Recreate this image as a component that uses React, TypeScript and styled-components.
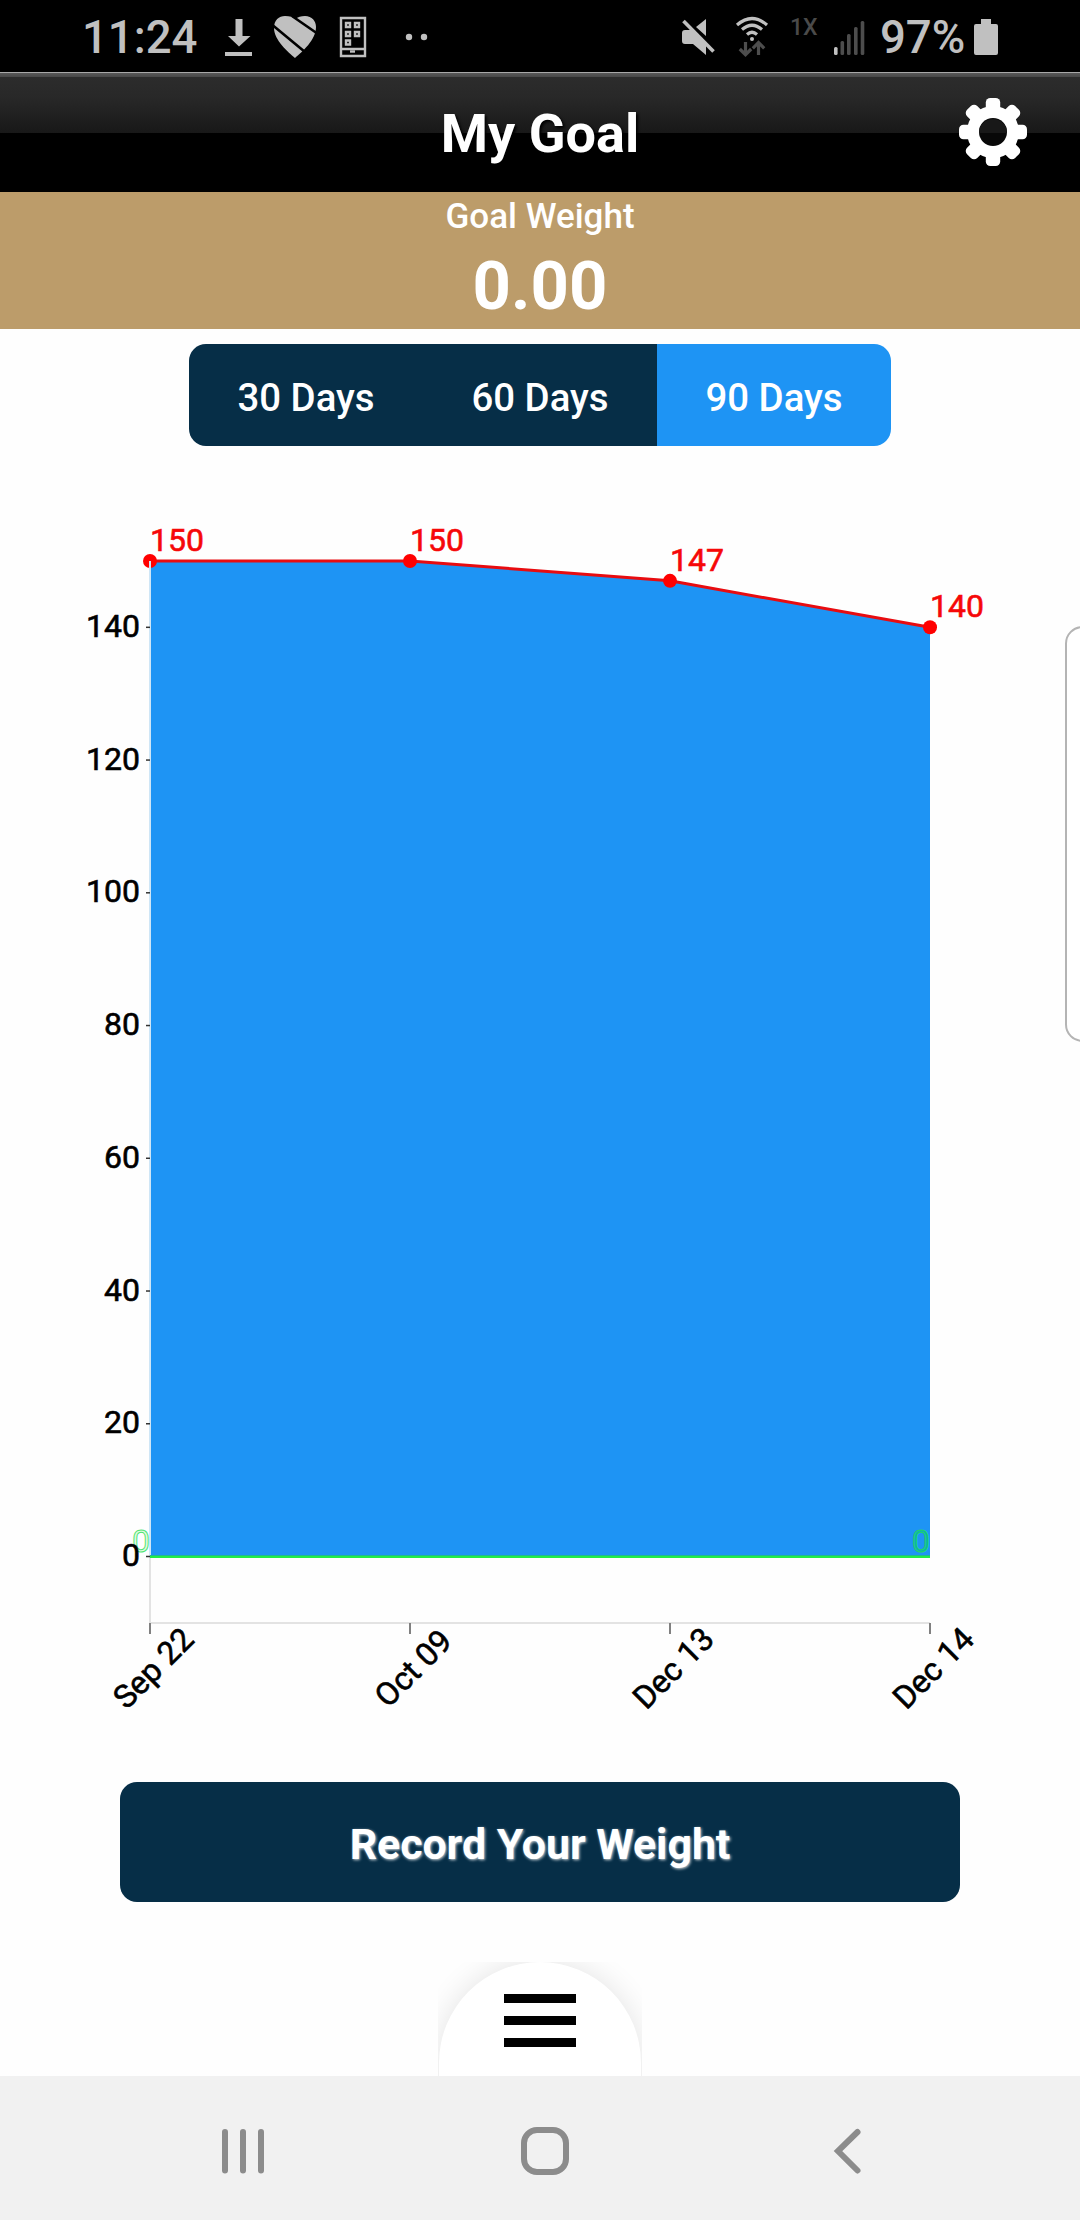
import React, { useState } from 'react';
import styled, { createGlobalStyle } from 'styled-components';

const GlobalStyle = createGlobalStyle`
  * { box-sizing: border-box; }
  body { margin: 0; background: #fff; }
`;

const Screen = styled.div`
  position: relative;
  display: flex;
  flex-direction: column;
  width: 1080px;
  height: 2220px;
  overflow: hidden;
  background: #fefefe;
  font-family: Roboto, 'Liberation Sans', sans-serif;
`;

const StatusBar = styled.div`
  display: flex;
  justify-content: space-between;
  height: 72px;
  padding: 0 81px 0 82px;
  background: #000;
  color: #c0c0c0;
`;

const StatusGroup = styled.div`
  display: flex;
  align-items: flex-start;
`;

const StatusText = styled.span<{ $width: number }>`
  width: ${(p) => p.$width}px;
  font-size: 45.5px;
  font-weight: 500;
  line-height: 76px;
  white-space: nowrap;
`;

const NetworkType = styled.span`
  width: 42px;
  padding-left: 11px;
  color: #4a4a4a;
  font-size: 23px;
  font-weight: 500;
  line-height: 56px;
`;

const StatusIcon = styled.svg`
  display: block;
  flex: none;
  height: 72px;
`;

const Header = styled.header`
  display: grid;
  grid-template-columns: 1fr auto 1fr;
  align-items: center;
  height: 120px;
  padding: 0 53px;
  background: linear-gradient(
    #a8a8a8 0, #a8a8a8 1px, #585858 1px, #484848 5px, #2c2c2c 5px,
    #282828 26px, #181818 61px, #000 61px
  );
`;

const Title = styled.h1`
  grid-column: 2;
  margin: 4px 0 0;
  color: #fff;
  font-size: 54px;
  font-weight: 700;
  line-height: 64px;
  text-shadow: 2px 2px 3px #000;
`;

const IconButton = styled.button`
  justify-self: end;
  width: 68px;
  height: 68px;
  padding: 0;
  border: 0;
  background: none;
  svg { display: block; }
`;

const GoalBanner = styled.section`
  display: flex;
  flex-direction: column;
  align-items: center;
  height: 137px;
  padding-top: 4px;
  background: #bc9c6a;
  color: #fff;
`;

const GoalLabel = styled.div`
  font-size: 35px;
  font-weight: 500;
  line-height: 42px;
`;

const GoalValue = styled.div`
  margin-top: 8px;
  font-size: 67px;
  font-weight: 700;
  line-height: 80px;
`;

const RangePicker = styled.div`
  display: grid;
  grid-template-columns: repeat(3, 1fr);
  align-self: center;
  width: 702px;
  height: 102px;
  margin-top: 15px;
  border-radius: 17px;
  overflow: hidden;
`;

const RangeOption = styled.button<{ $active: boolean }>`
  padding: 4px 0 0;
  border: 0;
  background: ${(p) => (p.$active ? '#1e94f4' : '#062e47')};
  color: #fff;
  font: 500 38.4px Roboto, 'Liberation Sans', sans-serif;
`;

const Chart = styled.svg`
  display: block;
  width: 1080px;
  height: 1300px;
  font-family: Roboto, 'Liberation Sans', sans-serif;
  font-size: 32px;
  font-weight: 400;
`;

const AxisLabel = styled.text`
  fill: #000;
  stroke: #000;
  stroke-width: 0.6px;
`;

const PointLabel = styled.text`
  fill: #f60808;
  stroke: #f60808;
  stroke-width: 0.6px;
`;

const RecordButton = styled.button`
  align-self: center;
  width: 840px;
  height: 120px;
  margin-top: 36px;
  padding: 4px 0 0;
  border: 0;
  border-radius: 17px;
  background: #062e47;
  color: #fff;
  font: 700 42.800px Roboto, 'Liberation Sans', sans-serif;
  text-shadow: 1px 1px 3px rgba(255, 255, 255, 0.8);
`;

const MenuTab = styled.div`
  align-self: center;
  width: 204px;
  height: 114px;
  margin-top: 60px;
  padding: 0 1px;
  overflow: hidden;
`;

const MenuDome = styled.button`
  display: flex;
  flex-direction: column;
  align-items: center;
  gap: 13px;
  width: 202px;
  height: 202px;
  padding: 32px 0 0;
  border: 0;
  border-radius: 101px 101px 0 0;
  background: #fff;
  box-shadow: 0 0 30px rgba(0, 0, 0, 0.11);
`;

const MenuLine = styled.span`
  width: 72px;
  height: 9px;
  background: #000;
`;

const NavBar = styled.nav`
  display: flex;
  align-items: center;
  justify-content: space-between;
  height: 144px;
  padding: 6px 218px 0 220px;
  background: #f1f1f1;
  svg { display: block; }
`;

const HomeIcon = styled.svg`
  margin-right: 8px;
`;

const EdgePanel = styled.div`
  position: absolute;
  top: 626px;
  right: -20px;
  width: 35px;
  height: 416px;
  border: 2px solid #b4b4b4;
  border-radius: 18px;
  background: #fff;
`;

const points = [
  { date: 'Sep 22', weight: 150 },
  { date: 'Oct 09', weight: 150 },
  { date: 'Dec 13', weight: 147 },
  { date: 'Dec 14', weight: 140 },
];
const labelTicks = [0, 20, 40, 60, 80, 100, 120, 140];
const px = (i: number) => 150 + i * 260;
const py = (v: number) => 1556.5 - v * 6.637;

function WeightChart() {
  const line = points.map((p, i) => `${px(i)},${py(p.weight)}`).join(' ');
  return (
    <Chart viewBox="0 446 1080 1300">
      <polygon points={`150,${py(0)} ${line} 930,${py(0)}`} fill="#1e94f4" />
      <polyline points={line} fill="none" stroke="#e80c10" strokeWidth="3" />
      {points.map((p, i) => (
        <g key={p.date}>
          <circle cx={px(i)} cy={py(p.weight)} r="7" fill="#f00" />
          <PointLabel x={px(i)} y={py(p.weight) - 10}>{p.weight}</PointLabel>
        </g>
      ))}
      <path d="M150 561V1556" stroke="#cfe6f6" strokeWidth="2" />
      <path d="M150 1556V1623H930" fill="none" stroke="#e3e3e3" strokeWidth="2" />
      <path d="M150 1556.5H930" stroke="#20ec48" strokeWidth="3" />
      <path d="M150 1555.5H930" stroke="#20b890" strokeWidth="1" />
      <g fill="#3fdf3f" fillOpacity="0.18" stroke="#22e052" strokeOpacity="0.8" strokeWidth="1" textAnchor="end">
        <text x="150" y="1551.5">0</text>
        <text x="930" y="1551.5" fill="#00d060" fillOpacity="0.5">0</text>
      </g>
      {labelTicks.map((v) => (
        <g key={v}>
          <path d={`M146 ${py(v)}h4`} stroke="#333" strokeWidth="1.5" />
          <AxisLabel x="140" y={py(v) + 9.5} textAnchor="end">{v}</AxisLabel>
        </g>
      ))}
      {points.map((p, i) => (
        <g key={p.date}>
          <path d={`M${px(i)} 1623v11`} stroke="#808080" strokeWidth="2" />
          <AxisLabel transform={`translate(${px(i) + 11} 1676) rotate(-45)`} textAnchor="middle">{p.date}</AxisLabel>
        </g>
      ))}
    </Chart>
  );
}

function LeftStatusIcons() {
  return (
    <>
      <StatusIcon width="50" viewBox="214 0 50 72" fill="#c0c0c0">
        <path d="M235.500 19h7v17h8L239 46.500 228 36h7.500zM225 52h27v4h-27z" />
      </StatusIcon>
      <StatusIcon width="62" viewBox="264 0 62 72">
        <path d="M295 58C288 52 274 40 274 28C274 20 279 16 285 16C290 16 293 17 295 19C298 17 301 16 305 16C312 16 316 21 316 27C316 40 302 52 295 58Z" fill="#c0c0c0" />
        <path d="M273 25.500L305 52M292 16L318 34" stroke="#000" strokeWidth="2.600" />
      </StatusIcon>
      <StatusIcon width="70" viewBox="326 0 70 72" fill="none" stroke="#c0c0c0" strokeWidth="2.400">
        <path d="M341 18h24v38h-24zM341 49h24" />
        <path d="M346 23h4v4h-4zM355 23h4v4h-4zM346 32h4v4h-4zM355 32h4v4h-4zM346 40.500h4v4h-4z" />
        <path d="M350 51.500h5" />
      </StatusIcon>
      <StatusIcon width="40" viewBox="396 0 40 72" fill="#c0c0c0">
        <circle cx="409" cy="37" r="3.200" />
        <circle cx="424" cy="37" r="3.200" />
      </StatusIcon>
    </>
  );
}

function RightStatusIcons() {
  return (
    <>
      <StatusIcon width="50" viewBox="676 0 50 72">
        <path d="M696 27L706 19V36ZM682 33Q682 30 685 30H693L706 43V55L693 44H685Q682 44 682 41Z" fill="#c0c0c0" />
        <path d="M683.500 21L713.500 51.500" stroke="#c0c0c0" strokeWidth="3.600" />
      </StatusIcon>
      <StatusIcon width="53" viewBox="726 0 53 72" fill="none" stroke="#c0c0c0" strokeWidth="3.200">
        <path d="M737 25Q752 12 767 25M742 29.500Q752 21 762 29.500M747 34.500Q752 30 757 34.500" />
        <circle cx="752" cy="39" r="2" fill="#c0c0c0" stroke="none" />
        <path d="M745.500 42V54M739.800 49L745.500 54.700L751.200 49M758.500 55V43M752.800 48.300L758.500 42.500L764.200 48.300" stroke="#4d4d4d" />
      </StatusIcon>
    </>
  );
}

function GearIcon() {
  return (
    <svg width="68" height="68" viewBox="-34 -34 68 68">
      <g fill="#fff">
        {[0, 45, 90, 135].map((a) => (
          <rect key={a} x="-7.200" y="-34" width="14.400" height="68" rx="4.500" transform={`rotate(${a})`} />
        ))}
      </g>
      <circle r="20" fill="none" stroke="#fff" strokeWidth="12" />
      <circle r="14" fill="#080808" />
      <path d="M-14 1A14 14 0 0 1 14 1Z" fill="#181818" />
    </svg>
  );
}

export default function App() {
  const [range, setRange] = useState(90);
  return (
    <Screen>
      <GlobalStyle />
      <StatusBar>
        <StatusGroup>
          <StatusText $width={132}>11:24</StatusText>
          <LeftStatusIcons />
        </StatusGroup>
        <StatusGroup>
          <RightStatusIcons />
          <NetworkType>1X</NetworkType>
          <StatusIcon width="59" viewBox="821 0 59 72" fill="#4d4d4d">
            <rect x="834" y="47" width="3.600" height="8" rx="1.500" fill="#c0c0c0" />
            <rect x="840.500" y="41" width="3.600" height="14" rx="1.500" />
            <rect x="847" y="34" width="3.600" height="21" rx="1.500" />
            <rect x="854" y="27" width="3.600" height="28" rx="1.500" />
            <rect x="860.700" y="21" width="3.600" height="34" rx="1.500" />
          </StatusIcon>
          <StatusText $width={90}>97%</StatusText>
          <StatusIcon width="29" viewBox="970 0 29 72" fill="#c0c0c0">
            <path d="M981 19h10v5h5q2 0 2 2v27q0 2-2 2h-20q-2 0-2-2V26q0-2 2-2h5z" />
          </StatusIcon>
        </StatusGroup>
      </StatusBar>
      <Header>
        <Title>My Goal</Title>
        <IconButton aria-label="Settings"><GearIcon /></IconButton>
      </Header>
      <GoalBanner>
        <GoalLabel>Goal Weight</GoalLabel>
        <GoalValue>0.00</GoalValue>
      </GoalBanner>
      <RangePicker>
        {[30, 60, 90].map((d) => (
          <RangeOption key={d} $active={d === range} onClick={() => setRange(d)}>{d} Days</RangeOption>
        ))}
      </RangePicker>
      <WeightChart />
      <RecordButton>Record Your Weight</RecordButton>
      <MenuTab>
        <MenuDome aria-label="Menu">
          <MenuLine />
          <MenuLine />
          <MenuLine />
        </MenuDome>
      </MenuTab>
      <NavBar>
        <svg width="46" height="48" viewBox="220 2127 46 48" fill="none" stroke="#8c8c8c" strokeWidth="6" strokeLinecap="round">
          <path d="M225 2132v38.500M243 2132v38.500M261 2132v38.500" />
        </svg>
        <HomeIcon width="48" height="48" viewBox="0 0 48 48" fill="none" stroke="#8c8c8c" strokeWidth="6">
          <rect x="3" y="3" width="42" height="42" rx="13" />
        </HomeIcon>
        <svg width="30" height="48" viewBox="832 2127 30 48" fill="none" stroke="#8c8c8c" strokeWidth="6" strokeLinecap="round">
          <path d="M857.500 2132L838 2151L857.500 2170.500" />
        </svg>
      </NavBar>
      <EdgePanel />
    </Screen>
  );
}
